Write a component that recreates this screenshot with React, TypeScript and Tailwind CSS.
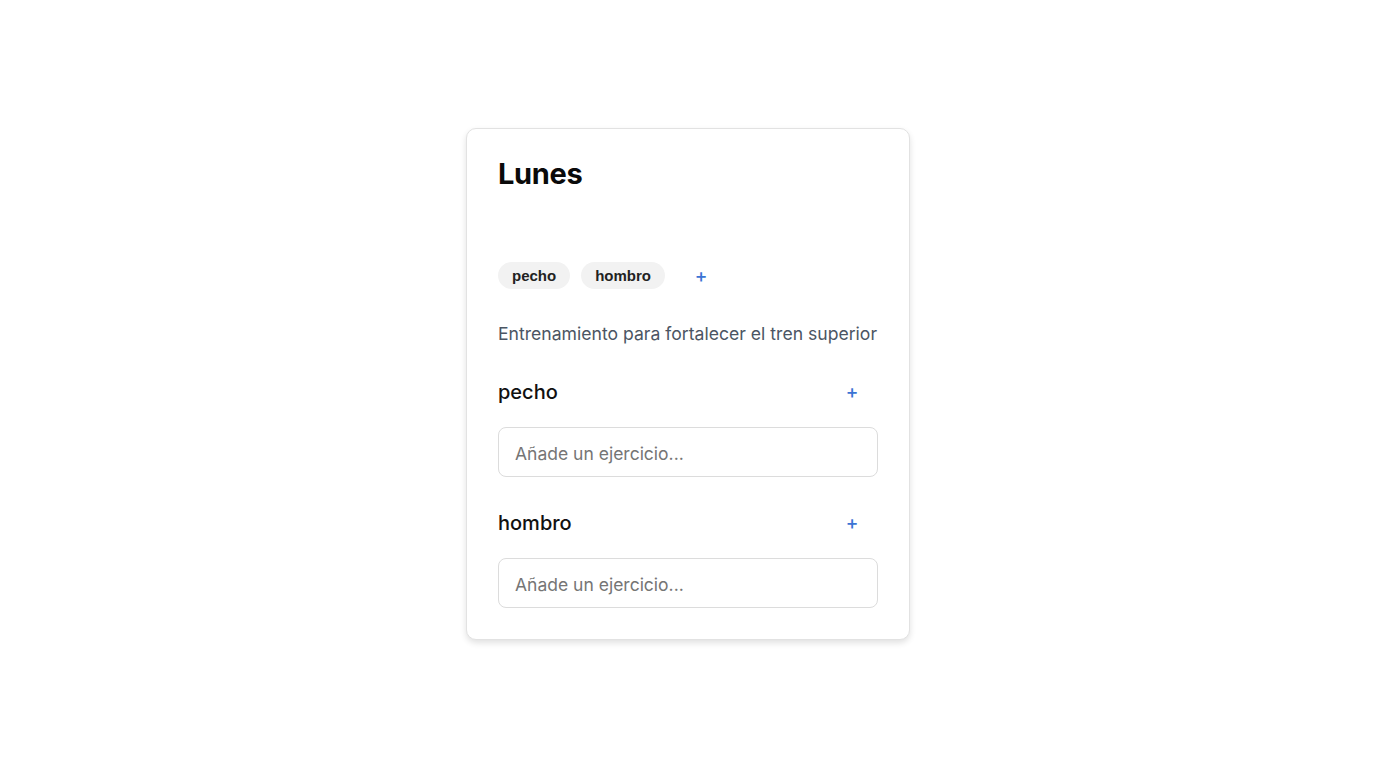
import { useState } from 'react'

const groups = ['pecho', 'hombro']

function ExerciseGroup({ name }: { name: string }) {
  const [value, setValue] = useState('')
  return (
    <div className="flex flex-col">
      <div className="flex items-center justify-between h-[28px]">
        <h3 className="text-[20px] font-medium text-[#111]">{name}</h3>
        <button className="w-[52px] pb-[2px] text-center text-[19px] font-medium text-[#3b74d4] leading-none">+</button>
      </div>
      <input
        value={value}
        onChange={(e) => setValue(e.target.value)}
        placeholder="Añade un ejercicio..."
        className="mt-[21px] h-[50px] w-full rounded-lg border border-[#dcdcdc] px-4 pt-[2px] text-[17.5px] text-[#333] placeholder:text-[#757575] outline-none"
      />
    </div>
  )
}

export default function App() {
  return (
    <div className="min-h-screen bg-white flex justify-center pt-[128px]" style={{ fontFamily: 'Inter, "Noto Sans", sans-serif' }}>
      <div className="w-[444px] h-fit rounded-[10px] border border-[#e2e2e2] bg-white px-[31px] pt-[27px] pb-[31px] shadow-[0_3px_6px_rgba(0,0,0,0.12)]">
        <h1 className="text-[29px] font-bold leading-[36px] text-[#0a0a0a] tracking-[-0.3px]">Lunes</h1>

        <div className="mt-[70px] flex items-center gap-[11px]">
          {groups.map((g) => (
            <span
              key={g}
              className="h-[27px] flex items-center rounded-full bg-[#f2f2f2] px-[14px] pt-[1px] text-[15px] font-bold text-[#222]"
              style={{ fontFamily: '"Liberation Sans", Arial, sans-serif' }}
            >
              {g}
            </span>
          ))}
          <button className="w-[50px] text-center text-[19px] font-medium text-[#3b74d4] leading-none">+</button>
        </div>

        <p className="mt-[33px] text-[17.6px] leading-[24px] text-[#4b5563]">
          Entrenamiento para fortalecer el tren superior
        </p>

        <div className="mt-[32px] flex flex-col gap-[32px]">
          {groups.map((g) => (
            <ExerciseGroup key={g} name={g} />
          ))}
        </div>
      </div>
    </div>
  )
}
